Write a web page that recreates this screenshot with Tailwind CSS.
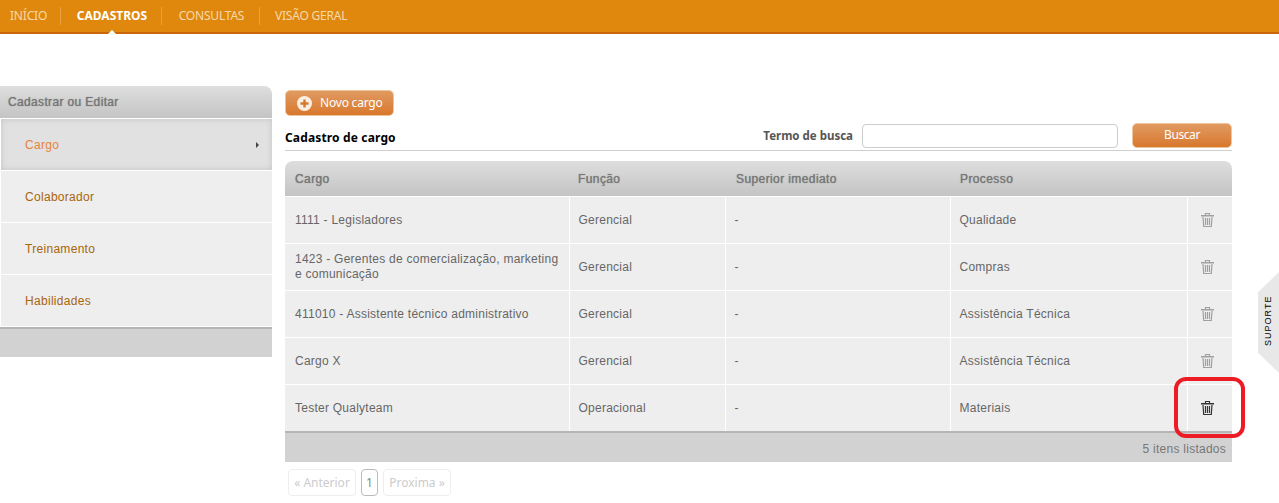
<!DOCTYPE html>
<html lang="pt-BR">
<head>
  <meta charset="UTF-8" />
  <title>Cadastro de cargo</title>
  <script src="https://cdn.jsdelivr.net/npm/@tailwindcss/browser@4"></script>
</head>
<body class="relative h-[503px] w-[1279px] overflow-hidden bg-white font-['Liberation_Sans',sans-serif] text-[12px] text-[#666]">
  <!-- Top nav -->
  <nav class="relative flex h-[34px] items-center border-b-2 border-[#c9660b] bg-[#e0880e] pb-[1px] font-['Noto_Sans',sans-serif] text-[12px] tracking-[-0.2px] text-[#f5d9a8]">
    <a class="flex w-[61px] justify-start border-r border-[#e8a040] pl-[10px]">INÍCIO</a>
    <a class="flex w-[101px] justify-center border-r border-[#e8a040] pl-[2px] font-bold tracking-normal text-white">CADASTROS</a>
    <a class="flex w-[98px] justify-center border-r border-[#e8a040] pl-[2px]">CONSULTAS</a>
    <a class="pl-[15px]">VISÃO GERAL</a>
    <span class="absolute bottom-[-2px] left-[108px] h-0 w-0 border-x-[4px] border-b-[4px] border-x-transparent border-b-white"></span>
  </nav>

  <div class="mt-[52px] flex items-start">
    <!-- Sidebar -->
    <aside class="w-[272px] tracking-[0.3px]">
      <h2 class="flex h-[32px] items-center rounded-tr-lg bg-gradient-to-b from-[#dedede] to-[#c4c4c4] pl-[8px] text-[12px] tracking-[0.35px] text-[#777] [text-shadow:0_0_1px_#777]">Cadastrar ou Editar</h2>
      <ul class="mt-[1px] border-l border-white">
        <li class="relative flex h-[51px] items-center bg-[#e1e1e1] pl-[24px] text-[#e8833a] shadow-[inset_0_0_6px_#c4c4c4]">
          Cargo
          <span class="absolute right-[13px] top-[23px] h-0 w-0 border-y-[3px] border-l-[3px] border-y-transparent border-l-[#444]"></span>
        </li>
        <li class="mt-[1px] flex h-[51px] items-center bg-[#eeeeee] pl-[24px] text-[#a8650b]">Colaborador</li>
        <li class="mt-[1px] flex h-[51px] items-center bg-[#eeeeee] pl-[24px] text-[#a8650b]">Treinamento</li>
        <li class="mt-[1px] flex h-[51px] items-center bg-[#eeeeee] pl-[24px] text-[#a8650b]">Habilidades</li>
      </ul>
      <div class="mt-[1px] h-[30px] border-t-2 border-[#b5b5b5] bg-[#d2d2d2]"></div>
    </aside>

    <!-- Main -->
    <main class="ml-[13px] w-[947px]">
      <button class="mt-[4px] flex h-[26px] w-[109px] items-center rounded-[5px] border border-[#f0c49a] bg-gradient-to-b from-[#e09a60] to-[#d8782c] pl-[11px] font-['Noto_Sans',sans-serif] text-[12px] tracking-[-0.2px] text-white">
        <svg class="mr-[8px]" width="15" height="15" viewBox="0 0 15 15"><circle cx="7.5" cy="7.5" r="7.5" fill="#fbeee2"/><path d="M7.5 3.5v8M3.5 7.5h8" stroke="#d8782c" stroke-width="2.4"/></svg>
        Novo cargo
      </button>

      <div class="mt-[5px] flex h-[30px] items-center border-b border-[#cfcfcf] font-['Noto_Sans',sans-serif]">
        <h1 class="mt-[4px] text-[12px] font-bold tracking-[0.15px] text-black">Cadastro de cargo</h1>
        <label class="ml-auto mr-[9px] text-[11.5px] font-bold text-[#555]">Termo de busca</label>
        <input class="h-[24px] w-[256px] rounded-[4px] border border-[#ccc] bg-white" />
        <button class="mb-[1px] ml-[14px] h-[25px] w-[100px] rounded-[5px] border border-[#f0c49a] bg-gradient-to-b from-[#e09a60] to-[#d8782c] text-[12px] tracking-[-0.4px] text-white">Buscar</button>
      </div>

      <table class="mt-[10px] w-[947px] table-fixed border-collapse tracking-[0.25px]">
        <colgroup><col class="w-[284px]" /><col class="w-[156px]" /><col class="w-[225px]" /><col class="w-[237px]" /><col class="w-[45px]" /></colgroup>
        <thead>
          <tr class="h-[35px] bg-gradient-to-b from-[#dedede] to-[#c4c4c4] text-left text-[#777] [text-shadow:0_0_1px_#777] [&_th]:pt-[2px]">
            <th class="rounded-tl-lg pl-[10px] font-normal tracking-[0.4px]">Cargo</th>
            <th class="pl-[9px] font-normal tracking-[0.4px]">Função</th>
            <th class="pl-[11px] font-normal tracking-[0.4px]">Superior imediato</th>
            <th class="pl-[10px] font-normal tracking-[0.4px]">Processo</th>
            <th class="rounded-tr-lg"></th>
          </tr>
        </thead>
        <tbody class="[&_td]:h-[47px] [&_td]:border-t [&_td]:border-white [&_td]:bg-[#eeeeee] [&_td]:pl-[9px] [&_td+td]:border-l [&_td:first-child]:pl-[10px]">
          <tr><td class="pr-[6px]">1111 - Legisladores</td><td>Gerencial</td><td>-</td><td>Qualidade</td><td><svg class="ml-[4px] text-[#a0a0a0]" width="13" height="14" viewBox="0 0 13 14" fill="none" stroke="currentColor" stroke-width="1.2"><path d="M0 3h13M0 2.5h13" /><path d="M4.5 2V.5h4V2M2 4l.7 9.5h7.6L11 4M4.5 5v7M6.5 5v7M8.5 5v7"/></svg></td></tr>
          <tr><td class="pr-[6px] leading-[15px]">1423 - Gerentes de comercialização, marketing e comunicação</td><td>Gerencial</td><td>-</td><td>Compras</td><td><svg class="ml-[4px] text-[#a0a0a0]" width="13" height="14" viewBox="0 0 13 14" fill="none" stroke="currentColor" stroke-width="1.2"><path d="M0 3h13M0 2.5h13" /><path d="M4.5 2V.5h4V2M2 4l.7 9.5h7.6L11 4M4.5 5v7M6.5 5v7M8.5 5v7"/></svg></td></tr>
          <tr><td class="pr-[6px]">411010 - Assistente técnico administrativo</td><td>Gerencial</td><td>-</td><td>Assistência Técnica</td><td><svg class="ml-[4px] text-[#a0a0a0]" width="13" height="14" viewBox="0 0 13 14" fill="none" stroke="currentColor" stroke-width="1.2"><path d="M0 3h13M0 2.5h13" /><path d="M4.5 2V.5h4V2M2 4l.7 9.5h7.6L11 4M4.5 5v7M6.5 5v7M8.5 5v7"/></svg></td></tr>
          <tr><td class="pr-[6px]">Cargo X</td><td>Gerencial</td><td>-</td><td>Assistência Técnica</td><td><svg class="ml-[4px] text-[#a0a0a0]" width="13" height="14" viewBox="0 0 13 14" fill="none" stroke="currentColor" stroke-width="1.2"><path d="M0 3h13M0 2.5h13" /><path d="M4.5 2V.5h4V2M2 4l.7 9.5h7.6L11 4M4.5 5v7M6.5 5v7M8.5 5v7"/></svg></td></tr>
          <tr><td class="pr-[6px]">Tester Qualyteam</td><td>Operacional</td><td>-</td><td>Materiais</td><td><svg class="ml-[4px] text-[#333]" width="13" height="14" viewBox="0 0 13 14" fill="none" stroke="currentColor" stroke-width="1.2"><path d="M0 3h13M0 2.5h13" /><path d="M4.5 2V.5h4V2M2 4l.7 9.5h7.6L11 4M4.5 5v7M6.5 5v7M8.5 5v7"/></svg></td></tr>
        </tbody>
      </table>
      <div class="flex h-[31px] items-end justify-end border-t-2 border-[#b5b5b5] bg-[#d2d2d2] pb-[4px] pr-[6px] tracking-[0.25px] text-[#777]">5 itens listados</div>

      <div class="ml-[3px] mt-[7px] flex gap-[5px] font-['Noto_Sans',sans-serif] text-[12px] text-[#ccc]">
        <a class="flex h-[27px] w-[68px] items-center justify-center rounded-[4px] border border-[#eee]">« Anterior</a>
        <a class="flex h-[27px] w-[17px] items-center justify-center rounded-[4px] border border-[#bbb] text-[#888]">1</a>
        <a class="flex h-[27px] w-[68px] items-center justify-center rounded-[4px] border border-[#eee]">Proxima »</a>
      </div>
    </main>
  </div>

  <!-- Suporte tab -->
  <div class="absolute left-[1258px] top-[272px] flex h-[101px] w-[21px] items-center justify-center bg-[#e8e8e8] [clip-path:polygon(0_20%,100%_0,100%_100%,0_80%)]">
    <span class="mb-[3px] ml-[2px] -rotate-90 font-['Liberation_Sans',sans-serif] text-[9px] tracking-[1px] text-black">SUPORTE</span>
  </div>

  <!-- Red highlight around delete icon -->
  <div class="absolute left-[1174px] top-[377px] h-[61px] w-[71px] rounded-[12px] border-[4px] border-[#ed1c24]"></div>
</body>
</html>
